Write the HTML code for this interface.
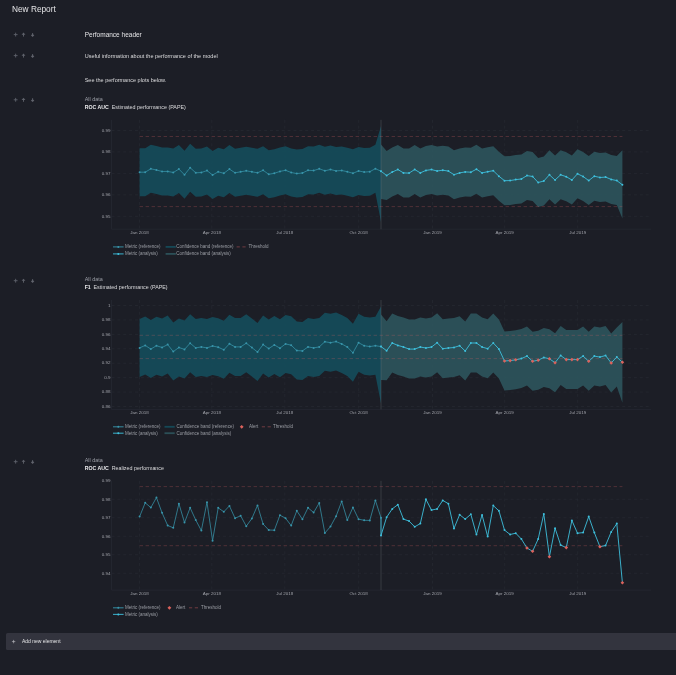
<!DOCTYPE html>
<html><head><meta charset="utf-8"><style>
html,body{margin:0;padding:0;background:#1c1e26;width:676px;height:675px;overflow:hidden}
svg{display:block;font-family:"Liberation Sans",sans-serif;will-change:transform}
</style></head><body>
<svg width="676" height="675" viewBox="0 0 676 675">
<text x="12" y="12.2" font-size="8.3" fill="#e4e4e6">New Report</text>
<path d="M13.75,34.60 h3.8 M15.65,32.70 v3.8" stroke="#60636c" stroke-width="0.9"/>
<path d="M23.50,36.60 V34.00" stroke="#60636c" stroke-width="0.9"/>
<path d="M21.60,34.70 L23.50,32.60 L25.40,34.70 Z" fill="#60636c"/>
<path d="M32.60,33.00 V35.40" stroke="#60636c" stroke-width="0.9"/>
<path d="M30.90,35.20 L32.60,34.00 L34.30,35.20 L32.60,36.90 Z" fill="#60636c"/>
<path d="M13.75,55.60 h3.8 M15.65,53.70 v3.8" stroke="#60636c" stroke-width="0.9"/>
<path d="M23.50,57.60 V55.00" stroke="#60636c" stroke-width="0.9"/>
<path d="M21.60,55.70 L23.50,53.60 L25.40,55.70 Z" fill="#60636c"/>
<path d="M32.60,54.00 V56.40" stroke="#60636c" stroke-width="0.9"/>
<path d="M30.90,56.20 L32.60,55.00 L34.30,56.20 L32.60,57.90 Z" fill="#60636c"/>
<path d="M13.75,99.80 h3.8 M15.65,97.90 v3.8" stroke="#60636c" stroke-width="0.9"/>
<path d="M23.50,101.80 V99.20" stroke="#60636c" stroke-width="0.9"/>
<path d="M21.60,99.90 L23.50,97.80 L25.40,99.90 Z" fill="#60636c"/>
<path d="M32.60,98.20 V100.60" stroke="#60636c" stroke-width="0.9"/>
<path d="M30.90,100.40 L32.60,99.20 L34.30,100.40 L32.60,102.10 Z" fill="#60636c"/>
<path d="M13.75,280.70 h3.8 M15.65,278.80 v3.8" stroke="#60636c" stroke-width="0.9"/>
<path d="M23.50,282.70 V280.10" stroke="#60636c" stroke-width="0.9"/>
<path d="M21.60,280.80 L23.50,278.70 L25.40,280.80 Z" fill="#60636c"/>
<path d="M32.60,279.10 V281.50" stroke="#60636c" stroke-width="0.9"/>
<path d="M30.90,281.30 L32.60,280.10 L34.30,281.30 L32.60,283.00 Z" fill="#60636c"/>
<path d="M13.75,461.70 h3.8 M15.65,459.80 v3.8" stroke="#60636c" stroke-width="0.9"/>
<path d="M23.50,463.70 V461.10" stroke="#60636c" stroke-width="0.9"/>
<path d="M21.60,461.80 L23.50,459.70 L25.40,461.80 Z" fill="#60636c"/>
<path d="M32.60,460.10 V462.50" stroke="#60636c" stroke-width="0.9"/>
<path d="M30.90,462.30 L32.60,461.10 L34.30,462.30 L32.60,464.00 Z" fill="#60636c"/>
<text x="84.7" y="37.2" font-size="6.5" fill="#e4e4e6">Perfomance header</text>
<text x="84.7" y="58.1" font-size="5.5" fill="#dcdcde">Useful information about the performance of the model</text>
<text x="84.7" y="82.1" font-size="5.5" fill="#dcdcde">See the performance plots below.</text>
<text x="84.7" y="101.00" font-size="5.4" fill="#9b9ea6">All data</text>
<text x="84.7" y="109.30" font-size="5.2" font-weight="bold" fill="#ececee">ROC AUC</text>
<text x="111.7" y="109.30" font-size="5.35" fill="#dcdcde">Estimated performance (PAPE)</text>
<text x="84.7" y="280.90" font-size="5.4" fill="#9b9ea6">All data</text>
<text x="84.7" y="289.20" font-size="5.2" font-weight="bold" fill="#ececee">F1</text>
<text x="93.5" y="289.20" font-size="5.35" fill="#dcdcde">Estimated performance (PAPE)</text>
<text x="84.7" y="462.10" font-size="5.4" fill="#9b9ea6">All data</text>
<text x="84.7" y="470.10" font-size="5.2" font-weight="bold" fill="#ececee">ROC AUC</text>
<text x="111.7" y="470.10" font-size="5.35" fill="#dcdcde">Realized performance</text>
<line x1="111.5" y1="130.50" x2="649.5" y2="130.50" stroke="#262932" stroke-width="0.7" stroke-dasharray="3,2.87"/>
<text transform="translate(110.60,131.75) scale(1.17,1)" font-size="3.85" fill="#a0a2a9" text-anchor="end">0.99</text>
<line x1="111.5" y1="151.95" x2="649.5" y2="151.95" stroke="#262932" stroke-width="0.7" stroke-dasharray="3,2.87"/>
<text transform="translate(110.60,153.20) scale(1.17,1)" font-size="3.85" fill="#a0a2a9" text-anchor="end">0.98</text>
<line x1="111.5" y1="173.40" x2="649.5" y2="173.40" stroke="#262932" stroke-width="0.7" stroke-dasharray="3,2.87"/>
<text transform="translate(110.60,174.65) scale(1.17,1)" font-size="3.85" fill="#a0a2a9" text-anchor="end">0.97</text>
<line x1="111.5" y1="194.85" x2="649.5" y2="194.85" stroke="#262932" stroke-width="0.7" stroke-dasharray="3,2.87"/>
<text transform="translate(110.60,196.10) scale(1.17,1)" font-size="3.85" fill="#a0a2a9" text-anchor="end">0.96</text>
<line x1="111.5" y1="216.30" x2="649.5" y2="216.30" stroke="#262932" stroke-width="0.7" stroke-dasharray="3,2.87"/>
<text transform="translate(110.60,217.55) scale(1.17,1)" font-size="3.85" fill="#a0a2a9" text-anchor="end">0.95</text>
<line x1="139.60" y1="119.8" x2="139.60" y2="229.2" stroke="#262932" stroke-width="0.7" stroke-dasharray="3,2.87"/>
<text transform="translate(139.60,234.10) scale(1.17,1)" font-size="3.85" fill="#a0a2a9" text-anchor="middle">Jan 2018</text>
<line x1="211.80" y1="119.8" x2="211.80" y2="229.2" stroke="#262932" stroke-width="0.7" stroke-dasharray="3,2.87"/>
<text transform="translate(211.80,234.10) scale(1.17,1)" font-size="3.85" fill="#a0a2a9" text-anchor="middle">Apr 2018</text>
<line x1="284.80" y1="119.8" x2="284.80" y2="229.2" stroke="#262932" stroke-width="0.7" stroke-dasharray="3,2.87"/>
<text transform="translate(284.80,234.10) scale(1.17,1)" font-size="3.85" fill="#a0a2a9" text-anchor="middle">Jul 2018</text>
<line x1="358.70" y1="119.8" x2="358.70" y2="229.2" stroke="#262932" stroke-width="0.7" stroke-dasharray="3,2.87"/>
<text transform="translate(358.70,234.10) scale(1.17,1)" font-size="3.85" fill="#a0a2a9" text-anchor="middle">Oct 2018</text>
<line x1="432.50" y1="119.8" x2="432.50" y2="229.2" stroke="#262932" stroke-width="0.7" stroke-dasharray="3,2.87"/>
<text transform="translate(432.50,234.10) scale(1.17,1)" font-size="3.85" fill="#a0a2a9" text-anchor="middle">Jan 2019</text>
<line x1="504.70" y1="119.8" x2="504.70" y2="229.2" stroke="#262932" stroke-width="0.7" stroke-dasharray="3,2.87"/>
<text transform="translate(504.70,234.10) scale(1.17,1)" font-size="3.85" fill="#a0a2a9" text-anchor="middle">Apr 2019</text>
<line x1="577.70" y1="119.8" x2="577.70" y2="229.2" stroke="#262932" stroke-width="0.7" stroke-dasharray="3,2.87"/>
<text transform="translate(577.70,234.10) scale(1.17,1)" font-size="3.85" fill="#a0a2a9" text-anchor="middle">Jul 2019</text>
<line x1="111.5" y1="119.8" x2="111.5" y2="229.2" stroke="#272a33" stroke-width="0.7"/>
<line x1="111.5" y1="229.2" x2="651" y2="229.2" stroke="#272a33" stroke-width="0.7"/>
<polygon points="139.60,148.20 145.21,148.20 150.83,144.80 156.44,146.00 162.06,147.50 167.67,147.40 173.28,148.50 178.90,145.10 184.51,150.80 190.13,143.70 195.74,148.80 201.35,148.50 206.97,146.60 212.58,151.00 218.20,147.80 223.81,149.30 229.42,145.10 235.04,148.80 240.65,147.80 246.27,146.80 251.88,147.80 257.49,148.80 263.11,146.30 268.72,150.30 274.34,149.30 279.95,147.40 285.56,146.30 291.18,148.50 296.79,149.60 302.41,149.00 308.02,146.30 313.63,146.60 319.25,144.80 324.86,146.80 330.48,145.50 336.09,146.90 341.70,146.50 347.32,147.70 352.93,149.30 358.55,146.90 364.16,148.10 369.77,147.70 375.39,144.70 381.00,126.00 381.00,222.00 375.39,192.70 369.77,195.70 364.16,196.10 358.55,194.90 352.93,197.30 347.32,195.70 341.70,194.50 336.09,194.90 330.48,193.50 324.86,194.80 319.25,192.80 313.63,194.60 308.02,194.30 302.41,197.00 296.79,197.60 291.18,196.50 285.56,194.30 279.95,195.40 274.34,197.30 268.72,198.30 263.11,194.30 257.49,196.80 251.88,195.80 246.27,194.80 240.65,195.80 235.04,196.80 229.42,193.10 223.81,197.30 218.20,195.80 212.58,199.00 206.97,194.60 201.35,196.50 195.74,196.80 190.13,191.70 184.51,198.80 178.90,193.10 173.28,196.50 167.67,195.40 162.06,195.50 156.44,194.00 150.83,192.80 145.21,196.20 139.60,196.20" fill="rgba(21,79,93,0.88)"/>
<polygon points="381.00,144.50 386.62,151.00 392.23,147.60 397.84,145.00 403.46,148.40 409.07,148.60 414.69,145.00 420.30,148.40 425.91,145.90 431.53,145.10 437.14,146.50 442.76,145.70 448.37,146.60 453.98,150.20 459.60,148.40 465.21,147.40 470.83,147.70 476.44,144.70 482.05,148.40 487.67,147.20 493.28,146.20 498.90,151.70 504.51,156.20 510.12,156.10 515.74,155.10 521.35,154.50 526.97,151.10 532.58,152.00 538.19,158.00 543.81,156.50 549.42,150.30 555.04,155.50 560.65,150.30 566.26,152.20 571.88,155.50 577.49,149.30 583.11,152.00 588.72,156.10 594.33,151.70 599.95,153.00 605.56,152.60 611.18,154.90 616.79,156.10 622.40,150.20 622.40,218.50 616.79,205.10 611.18,203.90 605.56,201.60 599.95,202.00 594.33,200.70 588.72,205.10 583.11,201.00 577.49,198.30 571.88,204.50 566.26,201.20 560.65,199.30 555.04,204.50 549.42,199.30 543.81,205.50 538.19,207.00 532.58,201.00 526.97,200.10 521.35,203.50 515.74,204.10 510.12,205.10 504.51,205.20 498.90,200.70 493.28,195.20 487.67,196.20 482.05,197.40 476.44,193.70 470.83,196.70 465.21,196.40 459.60,197.40 453.98,199.20 448.37,195.60 442.76,194.70 437.14,195.50 431.53,194.10 425.91,194.90 420.30,197.40 414.69,194.00 409.07,197.60 403.46,197.40 397.84,194.00 392.23,196.60 386.62,200.00 381.00,199.00" fill="rgba(46,86,95,0.88)"/>
<line x1="139.60" y1="136.50" x2="622.40" y2="136.50" stroke="rgba(215,95,100,0.34)" stroke-width="0.8" stroke-dasharray="3.4,2.6"/>
<line x1="139.60" y1="206.60" x2="622.40" y2="206.60" stroke="rgba(215,95,100,0.34)" stroke-width="0.8" stroke-dasharray="3.4,2.6"/>
<line x1="381.00" y1="119.8" x2="381.00" y2="229.2" stroke="rgba(125,132,142,0.3)" stroke-width="0.9"/>
<polyline points="139.60,172.20 145.21,172.20 150.83,168.80 156.44,170.00 162.06,171.50 167.67,171.40 173.28,172.50 178.90,169.10 184.51,174.80 190.13,167.70 195.74,172.80 201.35,172.50 206.97,170.60 212.58,175.00 218.20,171.80 223.81,173.30 229.42,169.10 235.04,172.80 240.65,171.80 246.27,170.80 251.88,171.80 257.49,172.80 263.11,170.30 268.72,174.30 274.34,173.30 279.95,171.40 285.56,170.30 291.18,172.50 296.79,173.60 302.41,173.00 308.02,170.30 313.63,170.60 319.25,168.80 324.86,170.80 330.48,169.50 336.09,170.90 341.70,170.50 347.32,171.70 352.93,173.30 358.55,170.90 364.16,172.10 369.77,171.70 375.39,168.70 381.00,171.20" fill="none" stroke="#3895ab" stroke-width="0.75" stroke-linejoin="round"/>
<polyline points="381.00,171.20 381.00,171.20 386.62,175.50 392.23,172.10 397.84,169.50 403.46,172.90 409.07,173.10 414.69,169.50 420.30,172.90 425.91,170.40 431.53,169.60 437.14,171.00 442.76,170.20 448.37,171.10 453.98,174.70 459.60,172.90 465.21,171.90 470.83,172.20 476.44,169.20 482.05,172.90 487.67,171.70 493.28,170.70 498.90,176.20 504.51,180.70 510.12,180.60 515.74,179.60 521.35,179.00 526.97,175.60 532.58,176.50 538.19,182.50 543.81,181.00 549.42,174.80 555.04,180.00 560.65,174.80 566.26,176.70 571.88,180.00 577.49,173.80 583.11,176.50 588.72,180.60 594.33,176.20 599.95,177.50 605.56,177.10 611.18,179.40 616.79,180.60 622.40,184.80" fill="none" stroke="#3ec0dd" stroke-width="0.9" stroke-linejoin="round"/>
<circle cx="139.60" cy="172.20" r="1.0" fill="#3895ab"/>
<circle cx="145.21" cy="172.20" r="1.0" fill="#3895ab"/>
<circle cx="150.83" cy="168.80" r="1.0" fill="#3895ab"/>
<circle cx="156.44" cy="170.00" r="1.0" fill="#3895ab"/>
<circle cx="162.06" cy="171.50" r="1.0" fill="#3895ab"/>
<circle cx="167.67" cy="171.40" r="1.0" fill="#3895ab"/>
<circle cx="173.28" cy="172.50" r="1.0" fill="#3895ab"/>
<circle cx="178.90" cy="169.10" r="1.0" fill="#3895ab"/>
<circle cx="184.51" cy="174.80" r="1.0" fill="#3895ab"/>
<circle cx="190.13" cy="167.70" r="1.0" fill="#3895ab"/>
<circle cx="195.74" cy="172.80" r="1.0" fill="#3895ab"/>
<circle cx="201.35" cy="172.50" r="1.0" fill="#3895ab"/>
<circle cx="206.97" cy="170.60" r="1.0" fill="#3895ab"/>
<circle cx="212.58" cy="175.00" r="1.0" fill="#3895ab"/>
<circle cx="218.20" cy="171.80" r="1.0" fill="#3895ab"/>
<circle cx="223.81" cy="173.30" r="1.0" fill="#3895ab"/>
<circle cx="229.42" cy="169.10" r="1.0" fill="#3895ab"/>
<circle cx="235.04" cy="172.80" r="1.0" fill="#3895ab"/>
<circle cx="240.65" cy="171.80" r="1.0" fill="#3895ab"/>
<circle cx="246.27" cy="170.80" r="1.0" fill="#3895ab"/>
<circle cx="251.88" cy="171.80" r="1.0" fill="#3895ab"/>
<circle cx="257.49" cy="172.80" r="1.0" fill="#3895ab"/>
<circle cx="263.11" cy="170.30" r="1.0" fill="#3895ab"/>
<circle cx="268.72" cy="174.30" r="1.0" fill="#3895ab"/>
<circle cx="274.34" cy="173.30" r="1.0" fill="#3895ab"/>
<circle cx="279.95" cy="171.40" r="1.0" fill="#3895ab"/>
<circle cx="285.56" cy="170.30" r="1.0" fill="#3895ab"/>
<circle cx="291.18" cy="172.50" r="1.0" fill="#3895ab"/>
<circle cx="296.79" cy="173.60" r="1.0" fill="#3895ab"/>
<circle cx="302.41" cy="173.00" r="1.0" fill="#3895ab"/>
<circle cx="308.02" cy="170.30" r="1.0" fill="#3895ab"/>
<circle cx="313.63" cy="170.60" r="1.0" fill="#3895ab"/>
<circle cx="319.25" cy="168.80" r="1.0" fill="#3895ab"/>
<circle cx="324.86" cy="170.80" r="1.0" fill="#3895ab"/>
<circle cx="330.48" cy="169.50" r="1.0" fill="#3895ab"/>
<circle cx="336.09" cy="170.90" r="1.0" fill="#3895ab"/>
<circle cx="341.70" cy="170.50" r="1.0" fill="#3895ab"/>
<circle cx="347.32" cy="171.70" r="1.0" fill="#3895ab"/>
<circle cx="352.93" cy="173.30" r="1.0" fill="#3895ab"/>
<circle cx="358.55" cy="170.90" r="1.0" fill="#3895ab"/>
<circle cx="364.16" cy="172.10" r="1.0" fill="#3895ab"/>
<circle cx="369.77" cy="171.70" r="1.0" fill="#3895ab"/>
<circle cx="375.39" cy="168.70" r="1.0" fill="#3895ab"/>
<circle cx="381.00" cy="171.20" r="1.0" fill="#3895ab"/>
<circle cx="381.00" cy="171.20" r="1.0" fill="#3ec0dd"/>
<circle cx="386.62" cy="175.50" r="1.0" fill="#3ec0dd"/>
<circle cx="392.23" cy="172.10" r="1.0" fill="#3ec0dd"/>
<circle cx="397.84" cy="169.50" r="1.0" fill="#3ec0dd"/>
<circle cx="403.46" cy="172.90" r="1.0" fill="#3ec0dd"/>
<circle cx="409.07" cy="173.10" r="1.0" fill="#3ec0dd"/>
<circle cx="414.69" cy="169.50" r="1.0" fill="#3ec0dd"/>
<circle cx="420.30" cy="172.90" r="1.0" fill="#3ec0dd"/>
<circle cx="425.91" cy="170.40" r="1.0" fill="#3ec0dd"/>
<circle cx="431.53" cy="169.60" r="1.0" fill="#3ec0dd"/>
<circle cx="437.14" cy="171.00" r="1.0" fill="#3ec0dd"/>
<circle cx="442.76" cy="170.20" r="1.0" fill="#3ec0dd"/>
<circle cx="448.37" cy="171.10" r="1.0" fill="#3ec0dd"/>
<circle cx="453.98" cy="174.70" r="1.0" fill="#3ec0dd"/>
<circle cx="459.60" cy="172.90" r="1.0" fill="#3ec0dd"/>
<circle cx="465.21" cy="171.90" r="1.0" fill="#3ec0dd"/>
<circle cx="470.83" cy="172.20" r="1.0" fill="#3ec0dd"/>
<circle cx="476.44" cy="169.20" r="1.0" fill="#3ec0dd"/>
<circle cx="482.05" cy="172.90" r="1.0" fill="#3ec0dd"/>
<circle cx="487.67" cy="171.70" r="1.0" fill="#3ec0dd"/>
<circle cx="493.28" cy="170.70" r="1.0" fill="#3ec0dd"/>
<circle cx="498.90" cy="176.20" r="1.0" fill="#3ec0dd"/>
<circle cx="504.51" cy="180.70" r="1.0" fill="#3ec0dd"/>
<circle cx="510.12" cy="180.60" r="1.0" fill="#3ec0dd"/>
<circle cx="515.74" cy="179.60" r="1.0" fill="#3ec0dd"/>
<circle cx="521.35" cy="179.00" r="1.0" fill="#3ec0dd"/>
<circle cx="526.97" cy="175.60" r="1.0" fill="#3ec0dd"/>
<circle cx="532.58" cy="176.50" r="1.0" fill="#3ec0dd"/>
<circle cx="538.19" cy="182.50" r="1.0" fill="#3ec0dd"/>
<circle cx="543.81" cy="181.00" r="1.0" fill="#3ec0dd"/>
<circle cx="549.42" cy="174.80" r="1.0" fill="#3ec0dd"/>
<circle cx="555.04" cy="180.00" r="1.0" fill="#3ec0dd"/>
<circle cx="560.65" cy="174.80" r="1.0" fill="#3ec0dd"/>
<circle cx="566.26" cy="176.70" r="1.0" fill="#3ec0dd"/>
<circle cx="571.88" cy="180.00" r="1.0" fill="#3ec0dd"/>
<circle cx="577.49" cy="173.80" r="1.0" fill="#3ec0dd"/>
<circle cx="583.11" cy="176.50" r="1.0" fill="#3ec0dd"/>
<circle cx="588.72" cy="180.60" r="1.0" fill="#3ec0dd"/>
<circle cx="594.33" cy="176.20" r="1.0" fill="#3ec0dd"/>
<circle cx="599.95" cy="177.50" r="1.0" fill="#3ec0dd"/>
<circle cx="605.56" cy="177.10" r="1.0" fill="#3ec0dd"/>
<circle cx="611.18" cy="179.40" r="1.0" fill="#3ec0dd"/>
<circle cx="616.79" cy="180.60" r="1.0" fill="#3ec0dd"/>
<circle cx="622.40" cy="184.80" r="1.0" fill="#3ec0dd"/>
<line x1="111.5" y1="305.50" x2="649.5" y2="305.50" stroke="#262932" stroke-width="0.7" stroke-dasharray="3,2.87"/>
<text transform="translate(110.60,306.75) scale(1.17,1)" font-size="3.85" fill="#a0a2a9" text-anchor="end">1</text>
<line x1="111.5" y1="319.93" x2="649.5" y2="319.93" stroke="#262932" stroke-width="0.7" stroke-dasharray="3,2.87"/>
<text transform="translate(110.60,321.18) scale(1.17,1)" font-size="3.85" fill="#a0a2a9" text-anchor="end">0.98</text>
<line x1="111.5" y1="334.36" x2="649.5" y2="334.36" stroke="#262932" stroke-width="0.7" stroke-dasharray="3,2.87"/>
<text transform="translate(110.60,335.61) scale(1.17,1)" font-size="3.85" fill="#a0a2a9" text-anchor="end">0.96</text>
<line x1="111.5" y1="348.79" x2="649.5" y2="348.79" stroke="#262932" stroke-width="0.7" stroke-dasharray="3,2.87"/>
<text transform="translate(110.60,350.04) scale(1.17,1)" font-size="3.85" fill="#a0a2a9" text-anchor="end">0.94</text>
<line x1="111.5" y1="363.22" x2="649.5" y2="363.22" stroke="#262932" stroke-width="0.7" stroke-dasharray="3,2.87"/>
<text transform="translate(110.60,364.47) scale(1.17,1)" font-size="3.85" fill="#a0a2a9" text-anchor="end">0.92</text>
<line x1="111.5" y1="377.65" x2="649.5" y2="377.65" stroke="#262932" stroke-width="0.7" stroke-dasharray="3,2.87"/>
<text transform="translate(110.60,378.90) scale(1.17,1)" font-size="3.85" fill="#a0a2a9" text-anchor="end">0.9</text>
<line x1="111.5" y1="392.08" x2="649.5" y2="392.08" stroke="#262932" stroke-width="0.7" stroke-dasharray="3,2.87"/>
<text transform="translate(110.60,393.33) scale(1.17,1)" font-size="3.85" fill="#a0a2a9" text-anchor="end">0.88</text>
<line x1="111.5" y1="406.51" x2="649.5" y2="406.51" stroke="#262932" stroke-width="0.7" stroke-dasharray="3,2.87"/>
<text transform="translate(110.60,407.76) scale(1.17,1)" font-size="3.85" fill="#a0a2a9" text-anchor="end">0.86</text>
<line x1="139.60" y1="300.0" x2="139.60" y2="409.4" stroke="#262932" stroke-width="0.7" stroke-dasharray="3,2.87"/>
<text transform="translate(139.60,414.30) scale(1.17,1)" font-size="3.85" fill="#a0a2a9" text-anchor="middle">Jan 2018</text>
<line x1="211.80" y1="300.0" x2="211.80" y2="409.4" stroke="#262932" stroke-width="0.7" stroke-dasharray="3,2.87"/>
<text transform="translate(211.80,414.30) scale(1.17,1)" font-size="3.85" fill="#a0a2a9" text-anchor="middle">Apr 2018</text>
<line x1="284.80" y1="300.0" x2="284.80" y2="409.4" stroke="#262932" stroke-width="0.7" stroke-dasharray="3,2.87"/>
<text transform="translate(284.80,414.30) scale(1.17,1)" font-size="3.85" fill="#a0a2a9" text-anchor="middle">Jul 2018</text>
<line x1="358.70" y1="300.0" x2="358.70" y2="409.4" stroke="#262932" stroke-width="0.7" stroke-dasharray="3,2.87"/>
<text transform="translate(358.70,414.30) scale(1.17,1)" font-size="3.85" fill="#a0a2a9" text-anchor="middle">Oct 2018</text>
<line x1="432.50" y1="300.0" x2="432.50" y2="409.4" stroke="#262932" stroke-width="0.7" stroke-dasharray="3,2.87"/>
<text transform="translate(432.50,414.30) scale(1.17,1)" font-size="3.85" fill="#a0a2a9" text-anchor="middle">Jan 2019</text>
<line x1="504.70" y1="300.0" x2="504.70" y2="409.4" stroke="#262932" stroke-width="0.7" stroke-dasharray="3,2.87"/>
<text transform="translate(504.70,414.30) scale(1.17,1)" font-size="3.85" fill="#a0a2a9" text-anchor="middle">Apr 2019</text>
<line x1="577.70" y1="300.0" x2="577.70" y2="409.4" stroke="#262932" stroke-width="0.7" stroke-dasharray="3,2.87"/>
<text transform="translate(577.70,414.30) scale(1.17,1)" font-size="3.85" fill="#a0a2a9" text-anchor="middle">Jul 2019</text>
<line x1="111.5" y1="300.0" x2="111.5" y2="409.4" stroke="#272a33" stroke-width="0.7"/>
<line x1="111.5" y1="409.4" x2="651" y2="409.4" stroke="#272a33" stroke-width="0.7"/>
<polygon points="139.60,318.90 145.21,316.40 150.83,320.10 156.44,316.70 162.06,318.50 167.67,315.60 173.28,322.60 178.90,318.50 184.51,320.40 190.13,314.20 195.74,318.90 201.35,317.90 206.97,318.90 212.58,317.00 218.20,318.20 223.81,320.80 229.42,314.80 235.04,317.90 240.65,317.90 246.27,314.20 251.88,318.60 257.49,323.00 263.11,315.60 268.72,319.60 274.34,315.90 279.95,319.20 285.56,314.90 291.18,316.20 296.79,321.60 302.41,321.90 308.02,317.90 313.63,318.90 319.25,317.90 324.86,312.70 330.48,313.70 336.09,312.60 341.70,314.90 347.32,318.00 352.93,323.80 358.55,313.70 364.16,316.70 369.77,317.60 375.39,316.70 381.00,306.60 381.00,403.50 375.39,374.70 369.77,375.60 364.16,374.70 358.55,371.70 352.93,381.80 347.32,376.00 341.70,372.90 336.09,370.60 330.48,371.70 324.86,370.70 319.25,375.90 313.63,376.90 308.02,375.90 302.41,379.90 296.79,379.60 291.18,374.20 285.56,372.90 279.95,377.20 274.34,373.90 268.72,377.60 263.11,373.60 257.49,381.00 251.88,376.60 246.27,372.20 240.65,375.90 235.04,375.90 229.42,372.80 223.81,378.80 218.20,376.20 212.58,375.00 206.97,376.90 201.35,375.90 195.74,376.90 190.13,372.20 184.51,378.40 178.90,376.50 173.28,380.60 167.67,373.60 162.06,376.50 156.44,374.70 150.83,378.10 145.21,374.40 139.60,376.90" fill="rgba(21,79,93,0.88)"/>
<polygon points="381.00,314.50 386.62,321.20 392.23,313.50 397.84,315.90 403.46,317.50 409.07,319.60 414.69,319.60 420.30,317.50 425.91,318.50 431.53,317.50 437.14,313.20 442.76,319.20 448.37,318.50 453.98,318.00 459.60,316.20 465.21,321.50 470.83,313.50 476.44,313.50 482.05,317.50 487.67,319.20 493.28,313.50 498.90,319.50 504.51,331.50 510.12,331.10 515.74,330.30 521.35,329.10 526.97,326.60 532.58,331.80 538.19,330.70 543.81,328.00 549.42,329.30 555.04,333.20 560.65,326.00 566.26,330.10 571.88,330.10 577.49,330.10 583.11,326.60 588.72,331.80 594.33,326.60 599.95,327.60 605.56,326.00 611.18,333.40 616.79,327.60 622.40,321.90 622.40,402.70 616.79,386.60 611.18,392.40 605.56,385.00 599.95,386.60 594.33,385.60 588.72,390.80 583.11,385.60 577.49,389.10 571.88,389.10 566.26,389.10 560.65,385.00 555.04,392.20 549.42,388.30 543.81,387.00 538.19,389.70 532.58,390.80 526.97,385.60 521.35,388.10 515.74,389.30 510.12,390.10 504.51,390.50 498.90,378.50 493.28,372.50 487.67,378.20 482.05,376.50 476.44,372.50 470.83,372.50 465.21,380.50 459.60,375.20 453.98,377.00 448.37,377.50 442.76,378.20 437.14,372.20 431.53,376.50 425.91,377.50 420.30,376.50 414.69,378.60 409.07,378.60 403.46,376.50 397.84,374.90 392.23,372.50 386.62,380.20 381.00,380.00" fill="rgba(46,86,95,0.88)"/>
<line x1="139.60" y1="335.30" x2="622.40" y2="335.30" stroke="rgba(215,95,100,0.34)" stroke-width="0.8" stroke-dasharray="3.4,2.6"/>
<line x1="139.60" y1="358.60" x2="622.40" y2="358.60" stroke="rgba(215,95,100,0.34)" stroke-width="0.8" stroke-dasharray="3.4,2.6"/>
<line x1="381.00" y1="300.0" x2="381.00" y2="409.4" stroke="rgba(125,132,142,0.3)" stroke-width="0.9"/>
<polyline points="139.60,347.90 145.21,345.40 150.83,349.10 156.44,345.70 162.06,347.50 167.67,344.60 173.28,351.60 178.90,347.50 184.51,349.40 190.13,343.20 195.74,347.90 201.35,346.90 206.97,347.90 212.58,346.00 218.20,347.20 223.81,349.80 229.42,343.80 235.04,346.90 240.65,346.90 246.27,343.20 251.88,347.60 257.49,352.00 263.11,344.60 268.72,348.60 274.34,344.90 279.95,348.20 285.56,343.90 291.18,345.20 296.79,350.60 302.41,350.90 308.02,346.90 313.63,347.90 319.25,346.90 324.86,341.70 330.48,342.70 336.09,341.60 341.70,343.90 347.32,347.00 352.93,352.80 358.55,342.70 364.16,345.70 369.77,346.60 375.39,345.70 381.00,346.60" fill="none" stroke="#3895ab" stroke-width="0.75" stroke-linejoin="round"/>
<polyline points="381.00,346.60 381.00,346.60 386.62,350.70 392.23,343.00 397.84,345.40 403.46,347.00 409.07,349.10 414.69,349.10 420.30,347.00 425.91,348.00 431.53,347.00 437.14,342.70 442.76,348.70 448.37,348.00 453.98,347.50 459.60,345.70 465.21,351.00 470.83,343.00 476.44,343.00 482.05,347.00 487.67,348.70 493.28,343.00 498.90,349.00 504.51,361.00 510.12,360.60 515.74,359.80 521.35,358.60 526.97,356.10 532.58,361.30 538.19,360.20 543.81,357.50 549.42,358.80 555.04,362.70 560.65,355.50 566.26,359.60 571.88,359.60 577.49,359.60 583.11,356.10 588.72,361.30 594.33,356.10 599.95,357.10 605.56,355.50 611.18,362.90 616.79,357.10 622.40,362.30" fill="none" stroke="#3ec0dd" stroke-width="0.9" stroke-linejoin="round"/>
<circle cx="139.60" cy="347.90" r="1.0" fill="#3895ab"/>
<circle cx="145.21" cy="345.40" r="1.0" fill="#3895ab"/>
<circle cx="150.83" cy="349.10" r="1.0" fill="#3895ab"/>
<circle cx="156.44" cy="345.70" r="1.0" fill="#3895ab"/>
<circle cx="162.06" cy="347.50" r="1.0" fill="#3895ab"/>
<circle cx="167.67" cy="344.60" r="1.0" fill="#3895ab"/>
<circle cx="173.28" cy="351.60" r="1.0" fill="#3895ab"/>
<circle cx="178.90" cy="347.50" r="1.0" fill="#3895ab"/>
<circle cx="184.51" cy="349.40" r="1.0" fill="#3895ab"/>
<circle cx="190.13" cy="343.20" r="1.0" fill="#3895ab"/>
<circle cx="195.74" cy="347.90" r="1.0" fill="#3895ab"/>
<circle cx="201.35" cy="346.90" r="1.0" fill="#3895ab"/>
<circle cx="206.97" cy="347.90" r="1.0" fill="#3895ab"/>
<circle cx="212.58" cy="346.00" r="1.0" fill="#3895ab"/>
<circle cx="218.20" cy="347.20" r="1.0" fill="#3895ab"/>
<circle cx="223.81" cy="349.80" r="1.0" fill="#3895ab"/>
<circle cx="229.42" cy="343.80" r="1.0" fill="#3895ab"/>
<circle cx="235.04" cy="346.90" r="1.0" fill="#3895ab"/>
<circle cx="240.65" cy="346.90" r="1.0" fill="#3895ab"/>
<circle cx="246.27" cy="343.20" r="1.0" fill="#3895ab"/>
<circle cx="251.88" cy="347.60" r="1.0" fill="#3895ab"/>
<circle cx="257.49" cy="352.00" r="1.0" fill="#3895ab"/>
<circle cx="263.11" cy="344.60" r="1.0" fill="#3895ab"/>
<circle cx="268.72" cy="348.60" r="1.0" fill="#3895ab"/>
<circle cx="274.34" cy="344.90" r="1.0" fill="#3895ab"/>
<circle cx="279.95" cy="348.20" r="1.0" fill="#3895ab"/>
<circle cx="285.56" cy="343.90" r="1.0" fill="#3895ab"/>
<circle cx="291.18" cy="345.20" r="1.0" fill="#3895ab"/>
<circle cx="296.79" cy="350.60" r="1.0" fill="#3895ab"/>
<circle cx="302.41" cy="350.90" r="1.0" fill="#3895ab"/>
<circle cx="308.02" cy="346.90" r="1.0" fill="#3895ab"/>
<circle cx="313.63" cy="347.90" r="1.0" fill="#3895ab"/>
<circle cx="319.25" cy="346.90" r="1.0" fill="#3895ab"/>
<circle cx="324.86" cy="341.70" r="1.0" fill="#3895ab"/>
<circle cx="330.48" cy="342.70" r="1.0" fill="#3895ab"/>
<circle cx="336.09" cy="341.60" r="1.0" fill="#3895ab"/>
<circle cx="341.70" cy="343.90" r="1.0" fill="#3895ab"/>
<circle cx="347.32" cy="347.00" r="1.0" fill="#3895ab"/>
<circle cx="352.93" cy="352.80" r="1.0" fill="#3895ab"/>
<circle cx="358.55" cy="342.70" r="1.0" fill="#3895ab"/>
<circle cx="364.16" cy="345.70" r="1.0" fill="#3895ab"/>
<circle cx="369.77" cy="346.60" r="1.0" fill="#3895ab"/>
<circle cx="375.39" cy="345.70" r="1.0" fill="#3895ab"/>
<circle cx="381.00" cy="346.60" r="1.0" fill="#3895ab"/>
<circle cx="381.00" cy="346.60" r="1.0" fill="#3ec0dd"/>
<circle cx="386.62" cy="350.70" r="1.0" fill="#3ec0dd"/>
<circle cx="392.23" cy="343.00" r="1.0" fill="#3ec0dd"/>
<circle cx="397.84" cy="345.40" r="1.0" fill="#3ec0dd"/>
<circle cx="403.46" cy="347.00" r="1.0" fill="#3ec0dd"/>
<circle cx="409.07" cy="349.10" r="1.0" fill="#3ec0dd"/>
<circle cx="414.69" cy="349.10" r="1.0" fill="#3ec0dd"/>
<circle cx="420.30" cy="347.00" r="1.0" fill="#3ec0dd"/>
<circle cx="425.91" cy="348.00" r="1.0" fill="#3ec0dd"/>
<circle cx="431.53" cy="347.00" r="1.0" fill="#3ec0dd"/>
<circle cx="437.14" cy="342.70" r="1.0" fill="#3ec0dd"/>
<circle cx="442.76" cy="348.70" r="1.0" fill="#3ec0dd"/>
<circle cx="448.37" cy="348.00" r="1.0" fill="#3ec0dd"/>
<circle cx="453.98" cy="347.50" r="1.0" fill="#3ec0dd"/>
<circle cx="459.60" cy="345.70" r="1.0" fill="#3ec0dd"/>
<circle cx="465.21" cy="351.00" r="1.0" fill="#3ec0dd"/>
<circle cx="470.83" cy="343.00" r="1.0" fill="#3ec0dd"/>
<circle cx="476.44" cy="343.00" r="1.0" fill="#3ec0dd"/>
<circle cx="482.05" cy="347.00" r="1.0" fill="#3ec0dd"/>
<circle cx="487.67" cy="348.70" r="1.0" fill="#3ec0dd"/>
<circle cx="493.28" cy="343.00" r="1.0" fill="#3ec0dd"/>
<circle cx="498.90" cy="349.00" r="1.0" fill="#3ec0dd"/>
<path d="M504.51,359.20 L506.31,361.00 L504.51,362.80 L502.71,361.00Z" fill="#dc625c"/>
<path d="M510.12,358.80 L511.92,360.60 L510.12,362.40 L508.32,360.60Z" fill="#dc625c"/>
<path d="M515.74,358.00 L517.54,359.80 L515.74,361.60 L513.94,359.80Z" fill="#dc625c"/>
<circle cx="521.35" cy="358.60" r="1.0" fill="#3ec0dd"/>
<circle cx="526.97" cy="356.10" r="1.0" fill="#3ec0dd"/>
<path d="M532.58,359.50 L534.38,361.30 L532.58,363.10 L530.78,361.30Z" fill="#dc625c"/>
<path d="M538.19,358.40 L539.99,360.20 L538.19,362.00 L536.39,360.20Z" fill="#dc625c"/>
<circle cx="543.81" cy="357.50" r="1.0" fill="#3ec0dd"/>
<path d="M549.42,357.00 L551.22,358.80 L549.42,360.60 L547.62,358.80Z" fill="#dc625c"/>
<path d="M555.04,360.90 L556.84,362.70 L555.04,364.50 L553.24,362.70Z" fill="#dc625c"/>
<circle cx="560.65" cy="355.50" r="1.0" fill="#3ec0dd"/>
<path d="M566.26,357.80 L568.06,359.60 L566.26,361.40 L564.46,359.60Z" fill="#dc625c"/>
<path d="M571.88,357.80 L573.68,359.60 L571.88,361.40 L570.08,359.60Z" fill="#dc625c"/>
<path d="M577.49,357.80 L579.29,359.60 L577.49,361.40 L575.69,359.60Z" fill="#dc625c"/>
<circle cx="583.11" cy="356.10" r="1.0" fill="#3ec0dd"/>
<path d="M588.72,359.50 L590.52,361.30 L588.72,363.10 L586.92,361.30Z" fill="#dc625c"/>
<circle cx="594.33" cy="356.10" r="1.0" fill="#3ec0dd"/>
<circle cx="599.95" cy="357.10" r="1.0" fill="#3ec0dd"/>
<circle cx="605.56" cy="355.50" r="1.0" fill="#3ec0dd"/>
<path d="M611.18,361.10 L612.98,362.90 L611.18,364.70 L609.38,362.90Z" fill="#dc625c"/>
<circle cx="616.79" cy="357.10" r="1.0" fill="#3ec0dd"/>
<path d="M622.40,360.50 L624.20,362.30 L622.40,364.10 L620.60,362.30Z" fill="#dc625c"/>
<text transform="translate(110.60,482.01) scale(1.17,1)" font-size="3.85" fill="#a0a2a9" text-anchor="end">0.99</text>
<line x1="111.5" y1="499.26" x2="649.5" y2="499.26" stroke="#262932" stroke-width="0.7" stroke-dasharray="3,2.87"/>
<text transform="translate(110.60,500.51) scale(1.17,1)" font-size="3.85" fill="#a0a2a9" text-anchor="end">0.98</text>
<line x1="111.5" y1="517.76" x2="649.5" y2="517.76" stroke="#262932" stroke-width="0.7" stroke-dasharray="3,2.87"/>
<text transform="translate(110.60,519.01) scale(1.17,1)" font-size="3.85" fill="#a0a2a9" text-anchor="end">0.97</text>
<line x1="111.5" y1="536.26" x2="649.5" y2="536.26" stroke="#262932" stroke-width="0.7" stroke-dasharray="3,2.87"/>
<text transform="translate(110.60,537.51) scale(1.17,1)" font-size="3.85" fill="#a0a2a9" text-anchor="end">0.96</text>
<line x1="111.5" y1="554.76" x2="649.5" y2="554.76" stroke="#262932" stroke-width="0.7" stroke-dasharray="3,2.87"/>
<text transform="translate(110.60,556.01) scale(1.17,1)" font-size="3.85" fill="#a0a2a9" text-anchor="end">0.95</text>
<line x1="111.5" y1="573.26" x2="649.5" y2="573.26" stroke="#262932" stroke-width="0.7" stroke-dasharray="3,2.87"/>
<text transform="translate(110.60,574.51) scale(1.17,1)" font-size="3.85" fill="#a0a2a9" text-anchor="end">0.94</text>
<line x1="139.60" y1="480.8" x2="139.60" y2="590.1" stroke="#262932" stroke-width="0.7" stroke-dasharray="3,2.87"/>
<text transform="translate(139.60,595.00) scale(1.17,1)" font-size="3.85" fill="#a0a2a9" text-anchor="middle">Jan 2018</text>
<line x1="211.80" y1="480.8" x2="211.80" y2="590.1" stroke="#262932" stroke-width="0.7" stroke-dasharray="3,2.87"/>
<text transform="translate(211.80,595.00) scale(1.17,1)" font-size="3.85" fill="#a0a2a9" text-anchor="middle">Apr 2018</text>
<line x1="284.80" y1="480.8" x2="284.80" y2="590.1" stroke="#262932" stroke-width="0.7" stroke-dasharray="3,2.87"/>
<text transform="translate(284.80,595.00) scale(1.17,1)" font-size="3.85" fill="#a0a2a9" text-anchor="middle">Jul 2018</text>
<line x1="358.70" y1="480.8" x2="358.70" y2="590.1" stroke="#262932" stroke-width="0.7" stroke-dasharray="3,2.87"/>
<text transform="translate(358.70,595.00) scale(1.17,1)" font-size="3.85" fill="#a0a2a9" text-anchor="middle">Oct 2018</text>
<line x1="432.50" y1="480.8" x2="432.50" y2="590.1" stroke="#262932" stroke-width="0.7" stroke-dasharray="3,2.87"/>
<text transform="translate(432.50,595.00) scale(1.17,1)" font-size="3.85" fill="#a0a2a9" text-anchor="middle">Jan 2019</text>
<line x1="504.70" y1="480.8" x2="504.70" y2="590.1" stroke="#262932" stroke-width="0.7" stroke-dasharray="3,2.87"/>
<text transform="translate(504.70,595.00) scale(1.17,1)" font-size="3.85" fill="#a0a2a9" text-anchor="middle">Apr 2019</text>
<line x1="577.70" y1="480.8" x2="577.70" y2="590.1" stroke="#262932" stroke-width="0.7" stroke-dasharray="3,2.87"/>
<text transform="translate(577.70,595.00) scale(1.17,1)" font-size="3.85" fill="#a0a2a9" text-anchor="middle">Jul 2019</text>
<line x1="111.5" y1="480.8" x2="111.5" y2="590.1" stroke="#272a33" stroke-width="0.7"/>
<line x1="111.5" y1="590.1" x2="651" y2="590.1" stroke="#272a33" stroke-width="0.7"/>
<line x1="139.60" y1="486.60" x2="622.40" y2="486.60" stroke="rgba(215,95,100,0.34)" stroke-width="0.8" stroke-dasharray="3.4,2.6"/>
<line x1="139.60" y1="545.70" x2="622.40" y2="545.70" stroke="rgba(215,95,100,0.34)" stroke-width="0.8" stroke-dasharray="3.4,2.6"/>
<line x1="381.00" y1="480.8" x2="381.00" y2="590.1" stroke="rgba(125,132,142,0.3)" stroke-width="0.9"/>
<polyline points="139.60,516.60 145.21,502.80 150.83,507.60 156.44,497.60 162.06,512.80 167.67,525.50 173.28,527.80 178.90,503.70 184.51,522.50 190.13,507.80 195.74,520.00 201.35,530.60 206.97,502.20 212.58,540.70 218.20,507.80 223.81,511.80 229.42,505.90 235.04,518.20 240.65,515.80 246.27,526.20 251.88,518.50 257.49,505.40 263.11,524.10 268.72,530.00 274.34,530.20 279.95,515.20 285.56,518.20 291.18,525.60 296.79,510.80 302.41,519.20 308.02,507.80 313.63,512.50 319.25,502.90 324.86,533.00 330.48,526.60 336.09,516.20 341.70,501.40 347.32,520.00 352.93,507.40 358.55,519.20 364.16,520.30 369.77,520.40 375.39,500.40 381.00,517.80" fill="none" stroke="#3895ab" stroke-width="0.75" stroke-linejoin="round"/>
<polyline points="381.00,517.80 381.00,535.50 386.62,517.20 392.23,508.90 397.84,504.70 403.46,519.10 409.07,521.10 414.69,526.80 420.30,523.60 425.91,499.30 431.53,510.10 437.14,508.90 442.76,500.40 448.37,503.70 453.98,528.50 459.60,514.70 465.21,519.10 470.83,514.30 476.44,534.50 482.05,514.90 487.67,536.50 493.28,505.60 498.90,510.80 504.51,530.10 510.12,534.50 515.74,533.20 521.35,539.00 526.97,548.00 532.58,551.30 538.19,539.00 543.81,513.90 549.42,556.70 555.04,528.20 560.65,545.10 566.26,547.60 571.88,520.50 577.49,533.20 583.11,532.60 588.72,516.60 594.33,532.60 599.95,546.70 605.56,545.50 611.18,532.00 616.79,523.60 622.40,582.70" fill="none" stroke="#3ec0dd" stroke-width="0.9" stroke-linejoin="round"/>
<circle cx="139.60" cy="516.60" r="1.0" fill="#3895ab"/>
<circle cx="145.21" cy="502.80" r="1.0" fill="#3895ab"/>
<circle cx="150.83" cy="507.60" r="1.0" fill="#3895ab"/>
<circle cx="156.44" cy="497.60" r="1.0" fill="#3895ab"/>
<circle cx="162.06" cy="512.80" r="1.0" fill="#3895ab"/>
<circle cx="167.67" cy="525.50" r="1.0" fill="#3895ab"/>
<circle cx="173.28" cy="527.80" r="1.0" fill="#3895ab"/>
<circle cx="178.90" cy="503.70" r="1.0" fill="#3895ab"/>
<circle cx="184.51" cy="522.50" r="1.0" fill="#3895ab"/>
<circle cx="190.13" cy="507.80" r="1.0" fill="#3895ab"/>
<circle cx="195.74" cy="520.00" r="1.0" fill="#3895ab"/>
<circle cx="201.35" cy="530.60" r="1.0" fill="#3895ab"/>
<circle cx="206.97" cy="502.20" r="1.0" fill="#3895ab"/>
<circle cx="212.58" cy="540.70" r="1.0" fill="#3895ab"/>
<circle cx="218.20" cy="507.80" r="1.0" fill="#3895ab"/>
<circle cx="223.81" cy="511.80" r="1.0" fill="#3895ab"/>
<circle cx="229.42" cy="505.90" r="1.0" fill="#3895ab"/>
<circle cx="235.04" cy="518.20" r="1.0" fill="#3895ab"/>
<circle cx="240.65" cy="515.80" r="1.0" fill="#3895ab"/>
<circle cx="246.27" cy="526.20" r="1.0" fill="#3895ab"/>
<circle cx="251.88" cy="518.50" r="1.0" fill="#3895ab"/>
<circle cx="257.49" cy="505.40" r="1.0" fill="#3895ab"/>
<circle cx="263.11" cy="524.10" r="1.0" fill="#3895ab"/>
<circle cx="268.72" cy="530.00" r="1.0" fill="#3895ab"/>
<circle cx="274.34" cy="530.20" r="1.0" fill="#3895ab"/>
<circle cx="279.95" cy="515.20" r="1.0" fill="#3895ab"/>
<circle cx="285.56" cy="518.20" r="1.0" fill="#3895ab"/>
<circle cx="291.18" cy="525.60" r="1.0" fill="#3895ab"/>
<circle cx="296.79" cy="510.80" r="1.0" fill="#3895ab"/>
<circle cx="302.41" cy="519.20" r="1.0" fill="#3895ab"/>
<circle cx="308.02" cy="507.80" r="1.0" fill="#3895ab"/>
<circle cx="313.63" cy="512.50" r="1.0" fill="#3895ab"/>
<circle cx="319.25" cy="502.90" r="1.0" fill="#3895ab"/>
<circle cx="324.86" cy="533.00" r="1.0" fill="#3895ab"/>
<circle cx="330.48" cy="526.60" r="1.0" fill="#3895ab"/>
<circle cx="336.09" cy="516.20" r="1.0" fill="#3895ab"/>
<circle cx="341.70" cy="501.40" r="1.0" fill="#3895ab"/>
<circle cx="347.32" cy="520.00" r="1.0" fill="#3895ab"/>
<circle cx="352.93" cy="507.40" r="1.0" fill="#3895ab"/>
<circle cx="358.55" cy="519.20" r="1.0" fill="#3895ab"/>
<circle cx="364.16" cy="520.30" r="1.0" fill="#3895ab"/>
<circle cx="369.77" cy="520.40" r="1.0" fill="#3895ab"/>
<circle cx="375.39" cy="500.40" r="1.0" fill="#3895ab"/>
<circle cx="381.00" cy="517.80" r="1.0" fill="#3895ab"/>
<circle cx="381.00" cy="535.50" r="1.0" fill="#3ec0dd"/>
<circle cx="386.62" cy="517.20" r="1.0" fill="#3ec0dd"/>
<circle cx="392.23" cy="508.90" r="1.0" fill="#3ec0dd"/>
<circle cx="397.84" cy="504.70" r="1.0" fill="#3ec0dd"/>
<circle cx="403.46" cy="519.10" r="1.0" fill="#3ec0dd"/>
<circle cx="409.07" cy="521.10" r="1.0" fill="#3ec0dd"/>
<circle cx="414.69" cy="526.80" r="1.0" fill="#3ec0dd"/>
<circle cx="420.30" cy="523.60" r="1.0" fill="#3ec0dd"/>
<circle cx="425.91" cy="499.30" r="1.0" fill="#3ec0dd"/>
<circle cx="431.53" cy="510.10" r="1.0" fill="#3ec0dd"/>
<circle cx="437.14" cy="508.90" r="1.0" fill="#3ec0dd"/>
<circle cx="442.76" cy="500.40" r="1.0" fill="#3ec0dd"/>
<circle cx="448.37" cy="503.70" r="1.0" fill="#3ec0dd"/>
<circle cx="453.98" cy="528.50" r="1.0" fill="#3ec0dd"/>
<circle cx="459.60" cy="514.70" r="1.0" fill="#3ec0dd"/>
<circle cx="465.21" cy="519.10" r="1.0" fill="#3ec0dd"/>
<circle cx="470.83" cy="514.30" r="1.0" fill="#3ec0dd"/>
<circle cx="476.44" cy="534.50" r="1.0" fill="#3ec0dd"/>
<circle cx="482.05" cy="514.90" r="1.0" fill="#3ec0dd"/>
<circle cx="487.67" cy="536.50" r="1.0" fill="#3ec0dd"/>
<circle cx="493.28" cy="505.60" r="1.0" fill="#3ec0dd"/>
<circle cx="498.90" cy="510.80" r="1.0" fill="#3ec0dd"/>
<circle cx="504.51" cy="530.10" r="1.0" fill="#3ec0dd"/>
<circle cx="510.12" cy="534.50" r="1.0" fill="#3ec0dd"/>
<circle cx="515.74" cy="533.20" r="1.0" fill="#3ec0dd"/>
<circle cx="521.35" cy="539.00" r="1.0" fill="#3ec0dd"/>
<path d="M526.97,546.20 L528.77,548.00 L526.97,549.80 L525.17,548.00Z" fill="#dc625c"/>
<path d="M532.58,549.50 L534.38,551.30 L532.58,553.10 L530.78,551.30Z" fill="#dc625c"/>
<circle cx="538.19" cy="539.00" r="1.0" fill="#3ec0dd"/>
<circle cx="543.81" cy="513.90" r="1.0" fill="#3ec0dd"/>
<path d="M549.42,554.90 L551.22,556.70 L549.42,558.50 L547.62,556.70Z" fill="#dc625c"/>
<circle cx="555.04" cy="528.20" r="1.0" fill="#3ec0dd"/>
<circle cx="560.65" cy="545.10" r="1.0" fill="#3ec0dd"/>
<path d="M566.26,545.80 L568.06,547.60 L566.26,549.40 L564.46,547.60Z" fill="#dc625c"/>
<circle cx="571.88" cy="520.50" r="1.0" fill="#3ec0dd"/>
<circle cx="577.49" cy="533.20" r="1.0" fill="#3ec0dd"/>
<circle cx="583.11" cy="532.60" r="1.0" fill="#3ec0dd"/>
<circle cx="588.72" cy="516.60" r="1.0" fill="#3ec0dd"/>
<circle cx="594.33" cy="532.60" r="1.0" fill="#3ec0dd"/>
<path d="M599.95,544.90 L601.75,546.70 L599.95,548.50 L598.15,546.70Z" fill="#dc625c"/>
<circle cx="605.56" cy="545.50" r="1.0" fill="#3ec0dd"/>
<circle cx="611.18" cy="532.00" r="1.0" fill="#3ec0dd"/>
<circle cx="616.79" cy="523.60" r="1.0" fill="#3ec0dd"/>
<path d="M622.40,580.90 L624.20,582.70 L622.40,584.50 L620.60,582.70Z" fill="#dc625c"/>
<line x1="113" y1="246.90" x2="123.6" y2="246.90" stroke="#3895ab" stroke-width="1.1" opacity="0.85"/>
<circle cx="118.3" cy="246.90" r="1.0" fill="#3895ab"/>
<text x="125" y="248.40" font-size="4.5" fill="#9c9fa6">Metric (reference)</text>
<rect x="165.6" y="246.00" width="10.2" height="1.8" fill="rgba(21,79,93,0.88)"/>
<text x="176.3" y="248.40" font-size="4.5" fill="#9c9fa6">Confidence band (reference)</text>
<line x1="236.6" y1="246.90" x2="245.6" y2="246.90" stroke="rgba(215,95,100,0.5)" stroke-width="0.9" stroke-dasharray="3.2,2.6"/>
<text x="248.6" y="248.40" font-size="4.5" fill="#9c9fa6">Threshold</text>
<line x1="113" y1="253.90" x2="123.6" y2="253.90" stroke="#3ec0dd" stroke-width="1.1" opacity="0.85"/>
<circle cx="118.3" cy="253.90" r="1.0" fill="#3ec0dd"/>
<text x="125" y="255.40" font-size="4.5" fill="#9c9fa6">Metric (analysis)</text>
<rect x="165.6" y="253.00" width="10.2" height="1.8" fill="rgba(46,86,95,0.88)"/>
<text x="176.3" y="255.40" font-size="4.5" fill="#9c9fa6">Confidence band (analysis)</text>
<line x1="113" y1="426.80" x2="123.6" y2="426.80" stroke="#3895ab" stroke-width="1.1" opacity="0.85"/>
<circle cx="118.3" cy="426.80" r="1.0" fill="#3895ab"/>
<text x="125" y="428.30" font-size="4.5" fill="#9c9fa6">Metric (reference)</text>
<rect x="164.5" y="425.90" width="10.2" height="1.8" fill="rgba(21,79,93,0.88)"/>
<text x="176.6" y="428.30" font-size="4.5" fill="#9c9fa6">Confidence band (reference)</text>
<path d="M241.70,424.90 L243.60,426.80 L241.70,428.70 L239.80,426.80Z" fill="#dc625c"/>
<text x="249" y="428.30" font-size="4.5" fill="#9c9fa6">Alert</text>
<line x1="261.8" y1="426.80" x2="270.8" y2="426.80" stroke="rgba(215,95,100,0.5)" stroke-width="0.9" stroke-dasharray="3.2,2.6"/>
<text x="273" y="428.30" font-size="4.5" fill="#9c9fa6">Threshold</text>
<line x1="113" y1="433.20" x2="123.6" y2="433.20" stroke="#3ec0dd" stroke-width="1.1" opacity="0.85"/>
<circle cx="118.3" cy="433.20" r="1.0" fill="#3ec0dd"/>
<text x="125" y="434.70" font-size="4.5" fill="#9c9fa6">Metric (analysis)</text>
<rect x="164.5" y="432.30" width="10.2" height="1.8" fill="rgba(46,86,95,0.88)"/>
<text x="176.6" y="434.70" font-size="4.5" fill="#9c9fa6">Confidence band (analysis)</text>
<line x1="113" y1="607.80" x2="123.6" y2="607.80" stroke="#3895ab" stroke-width="1.1" opacity="0.85"/>
<circle cx="118.3" cy="607.80" r="1.0" fill="#3895ab"/>
<text x="125" y="609.30" font-size="4.5" fill="#9c9fa6">Metric (reference)</text>
<path d="M169.40,605.90 L171.30,607.80 L169.40,609.70 L167.50,607.80Z" fill="#dc625c"/>
<text x="176.1" y="609.30" font-size="4.5" fill="#9c9fa6">Alert</text>
<line x1="189" y1="607.80" x2="198" y2="607.80" stroke="rgba(215,95,100,0.5)" stroke-width="0.9" stroke-dasharray="3.2,2.6"/>
<text x="201" y="609.30" font-size="4.5" fill="#9c9fa6">Threshold</text>
<line x1="113" y1="614.40" x2="123.6" y2="614.40" stroke="#3ec0dd" stroke-width="1.1" opacity="0.85"/>
<circle cx="118.3" cy="614.40" r="1.0" fill="#3ec0dd"/>
<text x="125" y="615.90" font-size="4.5" fill="#9c9fa6">Metric (analysis)</text>
<rect x="6" y="633" width="680" height="17" rx="1.6" fill="#33343e"/>
<path d="M11.9,641.6 h3.4 M13.6,639.9 v3.4" stroke="#c4c5cb" stroke-width="0.6"/>
<text x="21.9" y="643.3" font-size="5" fill="#e4e4e6">Add new element</text>
</svg>
</body></html>
